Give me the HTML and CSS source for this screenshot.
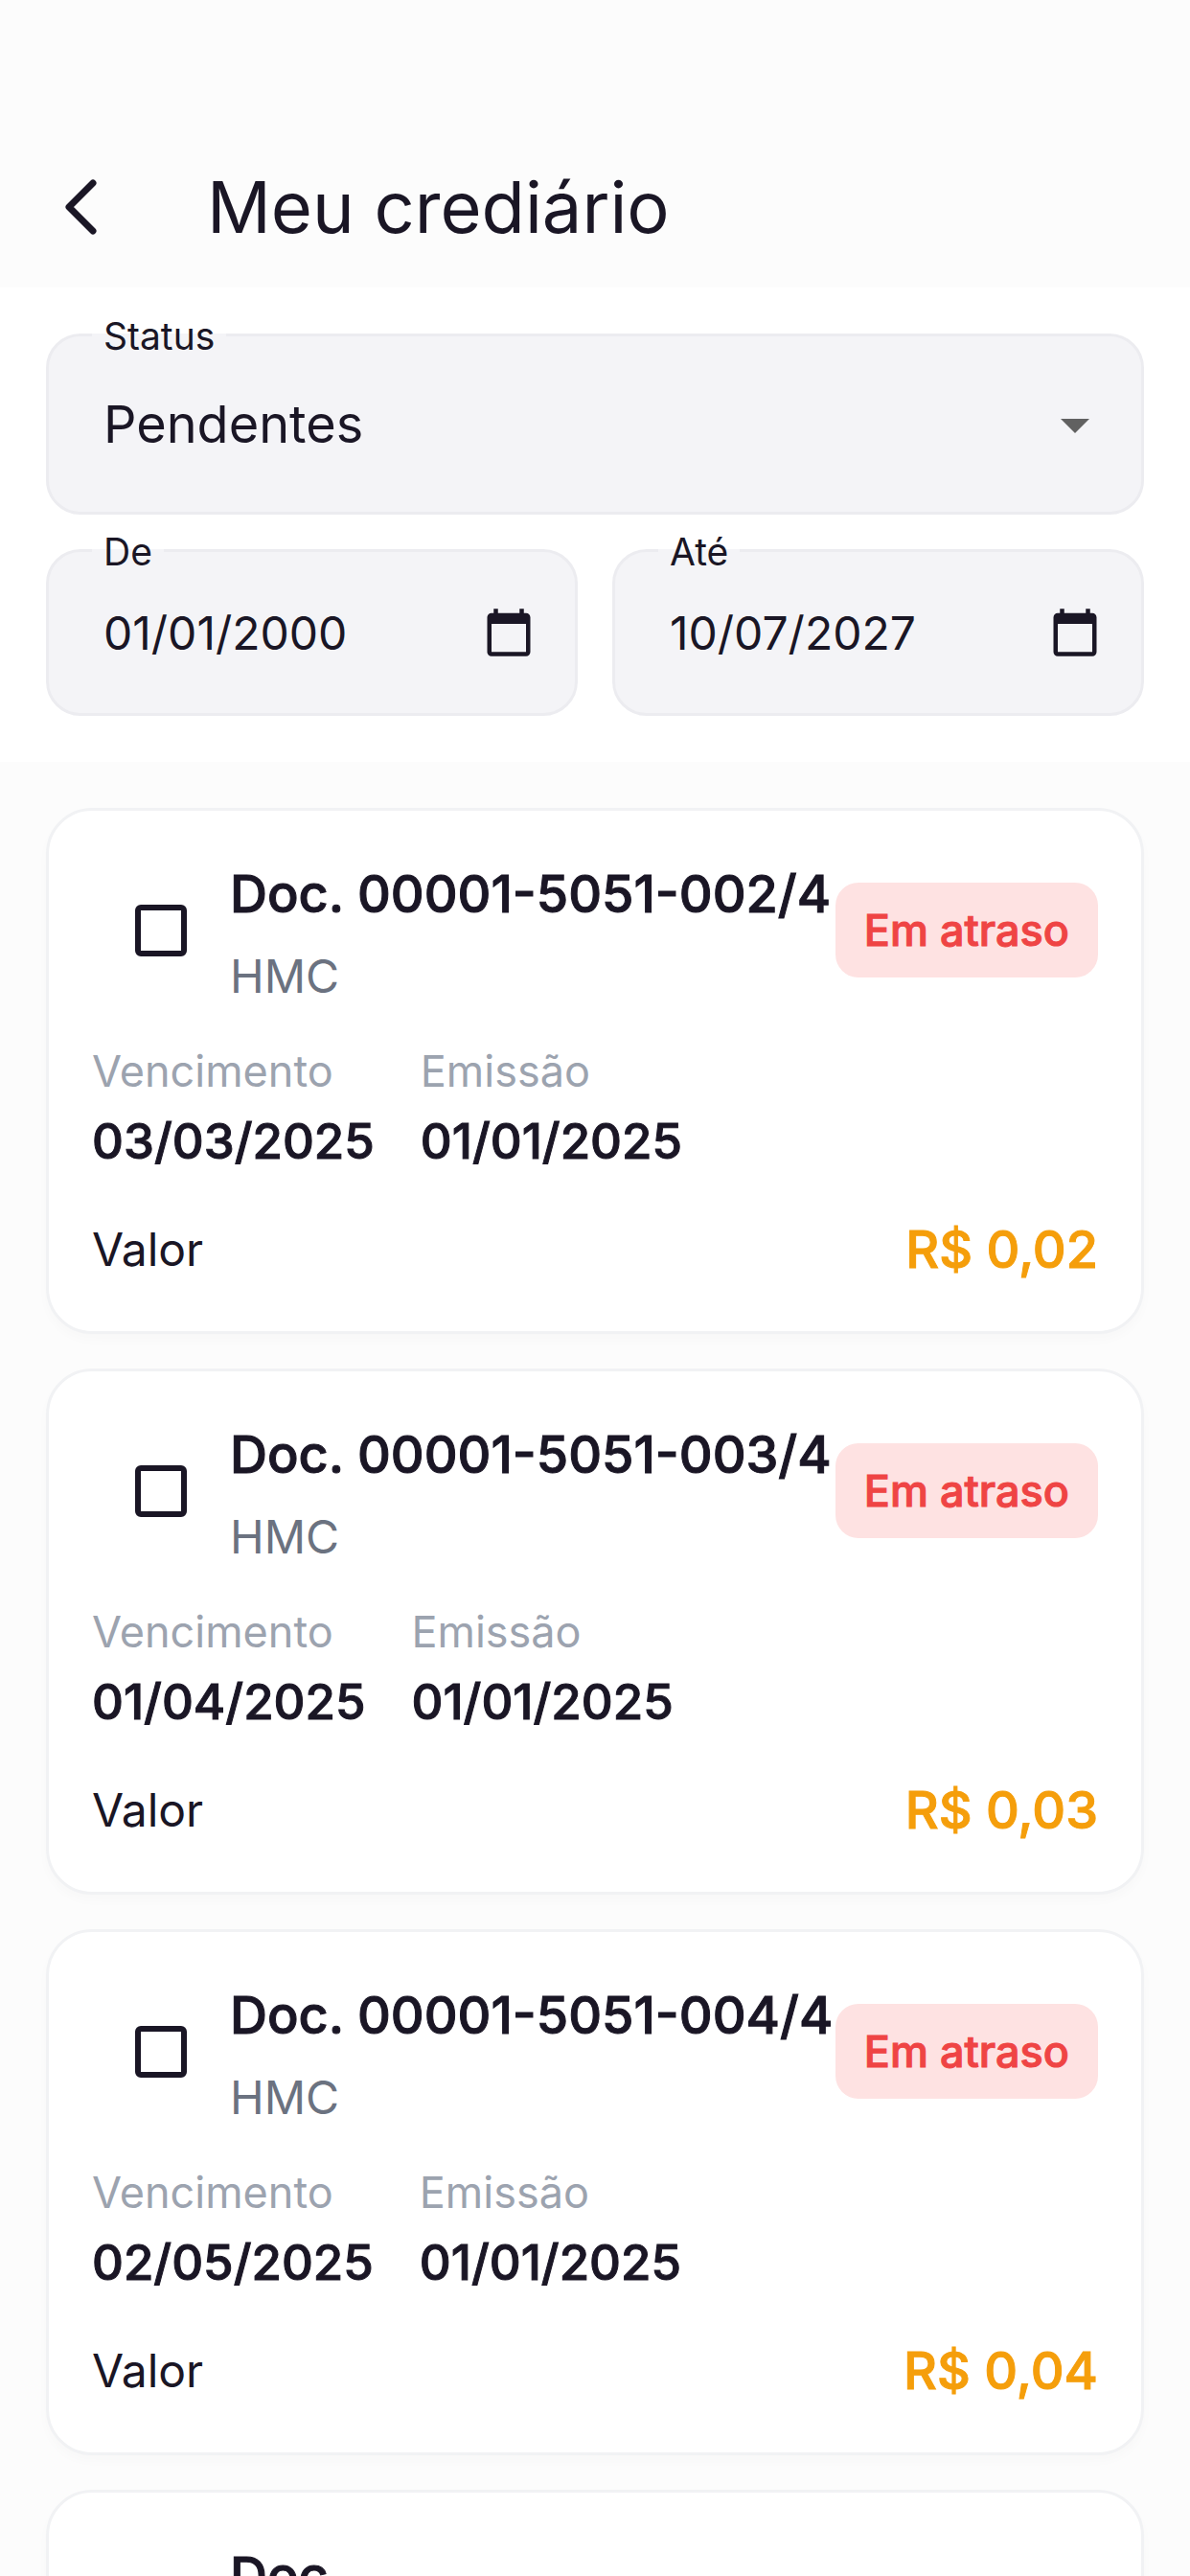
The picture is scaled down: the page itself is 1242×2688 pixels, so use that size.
FILE: index.html
```html
<!DOCTYPE html>
<html lang="pt-BR">
<head>
  <meta charset="UTF-8">
  <meta name="viewport" content="width=device-width, initial-scale=1.0">
  <title>Meu crediário</title>
  <link rel="stylesheet" href="styles.css">
</head>
<body>
  <header class="header">
    <button type="button" class="back-btn" aria-label="Voltar">
      <svg viewBox="0 0 36 60" fill="none" stroke="currentColor" stroke-width="7" stroke-linecap="round" stroke-linejoin="round"><path d="M31 5 6 30l25 25"/></svg>
    </button>
    <h1>Meu crediário</h1>
  </header>

  <form class="filters">
    <div class="field field-status">
      <label for="status">Status</label>
      <select id="status">
        <option selected>Pendentes</option>
      </select>
      <svg class="caret" viewBox="0 0 24 24" fill="currentColor"><path d="M7 10l5 5 5-5z"/></svg>
    </div>
    <div class="dates">
      <div class="field">
        <label for="startDate">De</label>
        <input type="text" id="startDate" value="01/01/2000">
        <button type="button" class="calendar-btn" aria-label="Escolher data inicial">
          <svg viewBox="0 0 24 24" fill="currentColor"><path d="M20 3h-1V1h-2v2H7V1H5v2H4c-1.1 0-2 .9-2 2v16c0 1.1.9 2 2 2h16c1.1 0 2-.9 2-2V5c0-1.1-.9-2-2-2zm0 18H4V8h16v13z"/></svg>
        </button>
      </div>
      <div class="field">
        <label for="endDate">Até</label>
        <input type="text" id="endDate" value="10/07/2027">
        <button type="button" class="calendar-btn" aria-label="Escolher data final">
          <svg viewBox="0 0 24 24" fill="currentColor"><path d="M20 3h-1V1h-2v2H7V1H5v2H4c-1.1 0-2 .9-2 2v16c0 1.1.9 2 2 2h16c1.1 0 2-.9 2-2V5c0-1.1-.9-2-2-2zm0 18H4V8h16v13z"/></svg>
        </button>
      </div>
    </div>
  </form>

  <main class="list">
    <article class="card">
      <div class="card-top">
        <div class="check"><input type="checkbox" id="doc2"></div>
        <label class="doc" for="doc2">
          <span class="doc-title">Doc. 00001-5051-002/4</span>
          <span class="doc-store">HMC</span>
        </label>
        <span class="badge">Em atraso</span>
      </div>
      <dl class="card-dates">
        <div><dt>Vencimento</dt><dd>03/03/2025</dd></div>
        <div><dt>Emissão</dt><dd>01/01/2025</dd></div>
      </dl>
      <div class="card-value"><span>Valor</span><strong>R$ 0,02</strong></div>
    </article>

    <article class="card">
      <div class="card-top">
        <div class="check"><input type="checkbox" id="doc3"></div>
        <label class="doc" for="doc3">
          <span class="doc-title">Doc. 00001-5051-003/4</span>
          <span class="doc-store">HMC</span>
        </label>
        <span class="badge">Em atraso</span>
      </div>
      <dl class="card-dates">
        <div><dt>Vencimento</dt><dd>01/04/2025</dd></div>
        <div><dt>Emissão</dt><dd>01/01/2025</dd></div>
      </dl>
      <div class="card-value"><span>Valor</span><strong>R$ 0,03</strong></div>
    </article>

    <article class="card">
      <div class="card-top">
        <div class="check"><input type="checkbox" id="doc4"></div>
        <label class="doc" for="doc4">
          <span class="doc-title">Doc. 00001-5051-004/4</span>
          <span class="doc-store">HMC</span>
        </label>
        <span class="badge">Em atraso</span>
      </div>
      <dl class="card-dates">
        <div><dt>Vencimento</dt><dd>02/05/2025</dd></div>
        <div><dt>Emissão</dt><dd>01/01/2025</dd></div>
      </dl>
      <div class="card-value"><span>Valor</span><strong>R$ 0,04</strong></div>
    </article>

    <article class="card">
      <div class="card-top">
        <div class="check"><input type="checkbox" id="doc5"></div>
        <label class="doc" for="doc5">
          <span class="doc-title">Doc.<br>00001-5052-001/4</span>
          <span class="doc-store">HMC</span>
        </label>
      </div>
    </article>
  </main>
</body>
</html>
```
FILE: styles.css
```css
* {
  margin: 0;
  padding: 0;
  box-sizing: border-box;
}
body {
  font-family: Inter, sans-serif;
  font-optical-sizing: none;
  background: #fcfcfc;
  color: #1a1625;
  height: 100vh;
  overflow: hidden;
  display: flex;
  flex-direction: column;
}
button,
input,
select {
  font: inherit;
  color: inherit;
  background: none;
  border: none;
  outline: none;
}
svg {
  display: block;
}
.header {
  display: flex;
  align-items: center;
  gap: 60px;
  padding: 132px 48px 0 12px;
  min-height: 300px;
}
.back-btn {
  display: flex;
  justify-content: center;
  width: 144px;
  cursor: pointer;
}
.back-btn svg {
  width: 36px;
  height: 60px;
}
h1 {
  font-size: 74px;
  font-weight: 400;
  line-height: 96px;
}
.filters {
  display: flex;
  flex-direction: column;
  gap: 36px;
  padding: 48px;
  background: #fff;
}
.dates {
  display: flex;
  gap: 36px;
}
.field {
  position: relative;
  flex: 1;
  min-width: 0;
  display: flex;
  align-items: center;
  padding: 0 33px 0 57px;
  border: 3px solid #ececf0;
  border-radius: 36px;
  background: #f4f4f7;
}
/* label sits on the border and hides it */
.field label {
  position: absolute;
  top: -24px;
  left: 45px;
  padding: 0 12px;
  font-size: 39px;
  line-height: 48px;
  background: linear-gradient(transparent 21px, #f4f4f7 21px);
}
.field input {
  flex: 1;
  min-width: 0;
  height: 168px;
  font-size: 48px;
}
.field select {
  flex: 1;
  height: 183px;
  font-size: 54px;
  appearance: none;
}
.caret {
  width: 72px;
  height: 72px;
  color: #616161;
  pointer-events: none;
}
.calendar-btn {
  padding: 9px;
  cursor: pointer;
}
.calendar-btn svg {
  width: 54px;
  height: 54px;
}
.list {
  flex: 1;
  min-height: 0;
  padding: 48px;
}
.card {
  padding: 45px;
  margin-bottom: 36px;
  border: 3px solid #f1f2f4;
  border-radius: 48px;
  background: #fff;
  box-shadow: 0 6px 12px rgba(0, 0, 0, 0.02);
}
.card-top {
  display: flex;
  align-items: center;
  margin-bottom: 36px;
}
.check {
  display: flex;
  justify-content: center;
  width: 144px;
}
.check input {
  appearance: none;
  width: 54px;
  height: 54px;
  border: 6px solid #1a1625;
  border-radius: 6px;
}
.check input:checked {
  background: #1a1625;
}
.doc {
  flex: 1;
  min-width: 0;
  display: flex;
  flex-direction: column;
  gap: 12px;
}
.doc-title {
  font-size: 54px;
  font-weight: 500;
  line-height: 84px;
  white-space: nowrap;
}
.doc-store {
  font-size: 48px;
  line-height: 63px;
  color: #6b7280;
}
.badge {
  padding: 18px 30px;
  border-radius: 24px;
  background: #fee2e2;
  color: #ef4444;
  font-size: 45px;
  font-weight: 500;
  line-height: 63px;
  white-space: nowrap;
}
.doc-title,
.badge,
.card-dates dd,
.card-value strong {
  -webkit-text-stroke: 1px currentColor;
}
.card-dates {
  display: flex;
  gap: 48px;
  margin-bottom: 36px;
}
.card-dates dt {
  margin-bottom: 6px;
  font-size: 45px;
  line-height: 63px;
  color: #9ca3af;
}
.card-dates dd {
  font-size: 51px;
  font-weight: 500;
  line-height: 72px;
}
.card-value {
  display: flex;
  align-items: center;
  justify-content: space-between;
  font-size: 48px;
  line-height: 81px;
}
.card-value strong {
  font-size: 54px;
  font-weight: 500;
  color: #f59e0b;
}
```
